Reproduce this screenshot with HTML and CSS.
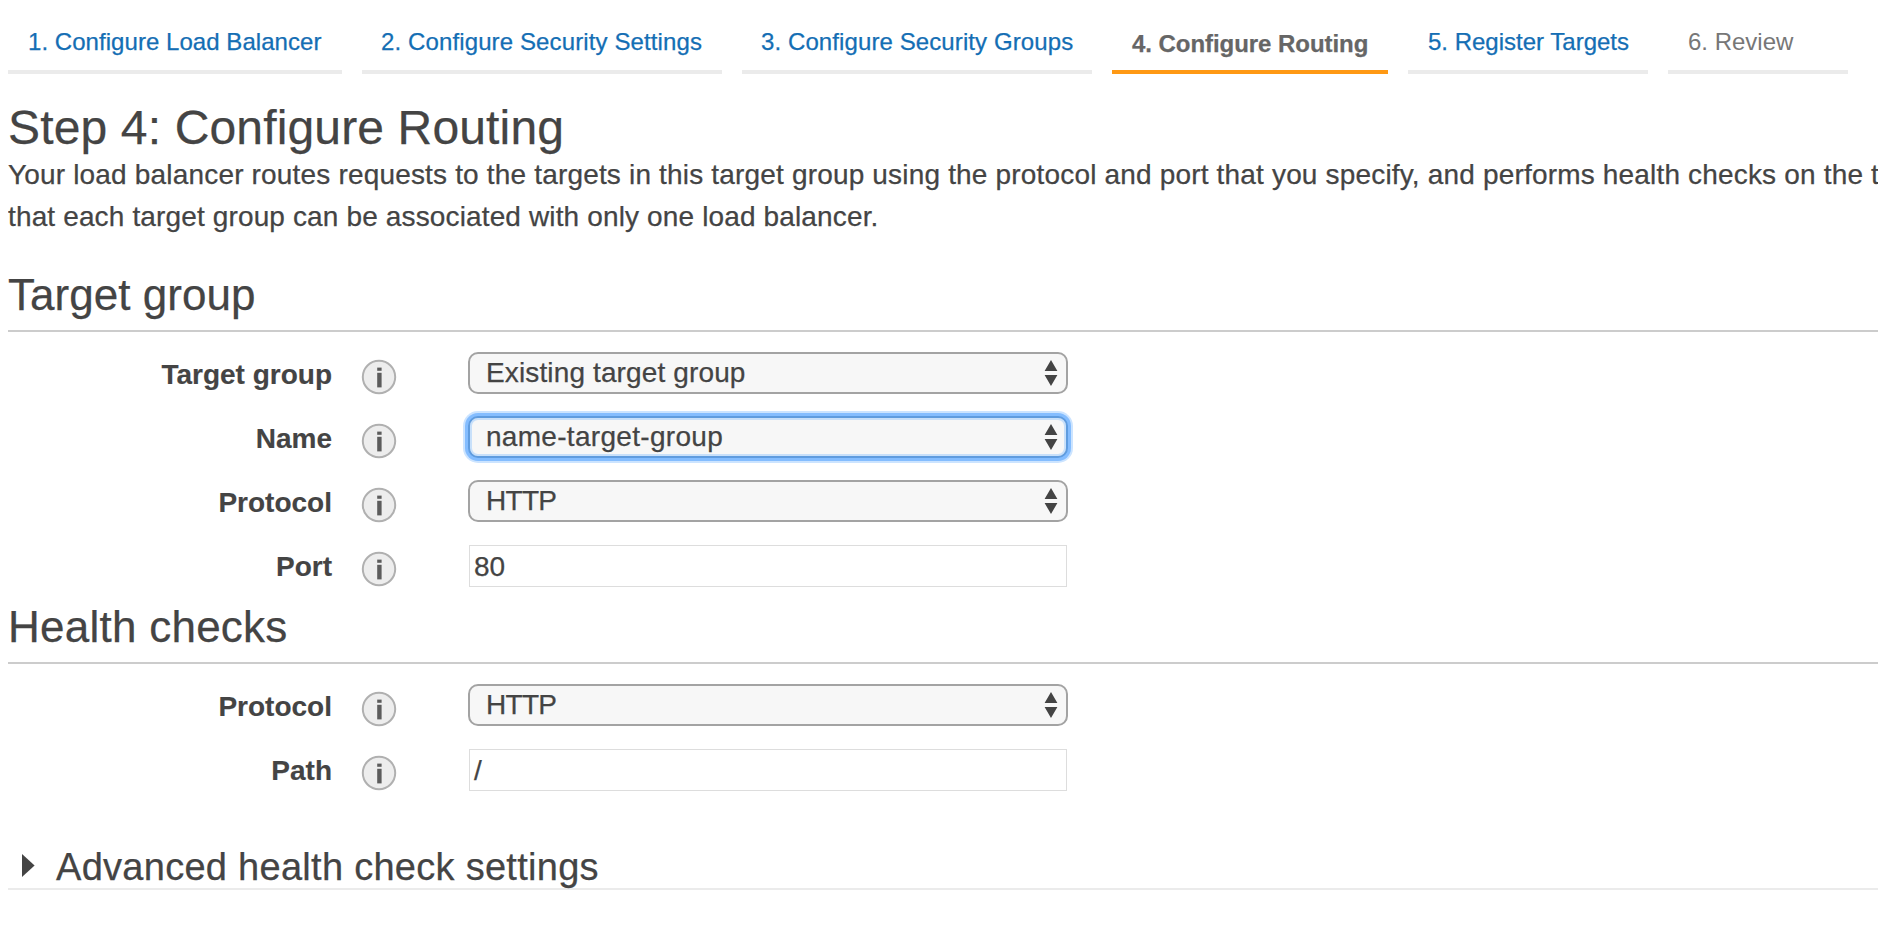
FILE: index.html
```html
<!DOCTYPE html>
<html lang="en">
<head>
<meta charset="utf-8">
<title>Configure Routing</title>
<link rel="stylesheet" href="styles.css">
</head>
<body>
<svg class="defs" width="0" height="0" aria-hidden="true">
  <symbol id="info" viewBox="0 0 36 36">
    <circle cx="18" cy="18" r="16.2" fill="#ededed" stroke="#b0b0b0" stroke-width="2"/>
    <rect x="16.2" y="8.6" width="4.4" height="3.2" fill="#5c5c5c"/>
    <rect x="16.2" y="13.8" width="4.4" height="14.6" fill="#5c5c5c"/>
  </symbol>
  <symbol id="updown" viewBox="0 0 14 28">
    <path d="M7 1L13.4 12H.6zM.6 16H13.4L7 27z" fill="#444"/>
  </symbol>
</svg>
<nav class="steps">
  <a class="step s1">1. Configure Load Balancer</a>
  <a class="step s2">2. Configure Security Settings</a>
  <a class="step s3">3. Configure Security Groups</a>
  <a class="step s4 active">4. Configure Routing</a>
  <a class="step s5">5. Register Targets</a>
  <a class="step s6 pending">6. Review</a>
</nav>
<main>
  <h1>Step 4: Configure Routing</h1>
  <p class="intro">Your load balancer routes requests to the targets in this target group using the protocol and port that you specify, and performs health checks on the t<br><span class="note">that each target group can be associated with only one load balancer.</span></p>

  <h2>Target group</h2>
  <div class="form">
    <div class="row"><label>Target group</label><svg class="info"><use href="#info"/></svg><div class="select"><span class="existing">Existing target group</span><svg><use href="#updown"/></svg></div></div>
    <div class="row"><label>Name</label><svg class="info"><use href="#info"/></svg><div class="select focused"><span class="name">name-target-group</span><svg><use href="#updown"/></svg></div></div>
    <div class="row"><label>Protocol</label><svg class="info"><use href="#info"/></svg><div class="select"><span class="protocol">HTTP</span><svg><use href="#updown"/></svg></div></div>
    <div class="row"><label>Port</label><svg class="info"><use href="#info"/></svg><div class="input">80</div></div>
  </div>

  <h2 class="health">Health checks</h2>
  <div class="form">
    <div class="row"><label>Protocol</label><svg class="info"><use href="#info"/></svg><div class="select"><span class="protocol">HTTP</span><svg><use href="#updown"/></svg></div></div>
    <div class="row"><label>Path</label><svg class="info"><use href="#info"/></svg><div class="input">/</div></div>
  </div>

  <h3><svg class="caret" viewBox="0 0 13 23"><path d="M0 0L12.6 11.5L0 23z" fill="#444"/></svg>Advanced health check settings</h3>
</main>
</body>
</html>
```

FILE: styles.css
```css
* { box-sizing: border-box; }
body {
  margin: 0;
  width: 1878px;
  height: 936px;
  overflow: hidden;
  background: #fff;
  color: #444;
  font-family: "Liberation Sans", Arial, sans-serif;
  font-size: 28px;
  -webkit-text-stroke: 0.25px;
  font-kerning: normal;
}
.defs { position: absolute; }
.steps { display: flex; gap: 20px; padding-left: 8px; height: 74px; }
.step {
  padding: 13px 0 0 20px;
  border-bottom: 4px solid #ebebeb;
  color: #146eb4;
  font-size: 24px;
  line-height: 57px;
  white-space: nowrap;
}
.s1 { width: 334px; letter-spacing: 0.05px; }
.s2 { width: 360px; padding-left: 19px; letter-spacing: 0.12px; }
.s3 { width: 350px; padding-left: 19px; letter-spacing: 0.1px; }
.s4 { width: 276px; letter-spacing: -0.05px; }
.s5 { width: 240px; }
.s6 { width: 180px; }
.step.active {
  padding-top: 17px;
  line-height: 53px;
  border-color: #ff9914;
  color: #666;
  font-weight: bold;
}
.step.pending { color: #777; -webkit-text-stroke: 0; }
main { padding: 28px 0 0 8px; }
h1, h2, h3, p { margin: 0; font-weight: normal; white-space: nowrap; }
h1 { font-size: 48px; line-height: 52px; letter-spacing: 0.15px; }
.intro { line-height: 42px; overflow: hidden; letter-spacing: 0.175px; }
.note { letter-spacing: 0.14px; }
h2 {
  margin-top: 32px;
  padding-bottom: 10px;
  border-bottom: 2px solid #ccc;
  font-size: 44px;
  line-height: 50px;
  letter-spacing: 0.04px;
}
h2.health { margin-top: 16px; letter-spacing: 0.25px; }
.form { display: grid; gap: 22px; margin-top: 20px; }
.row { display: flex; height: 42px; }
label {
  width: 324px;
  text-align: right;
  font-weight: bold;
  line-height: 46px;
  -webkit-text-stroke: 0.15px;
}
.info { width: 36px; height: 36px; margin: 7px 71px 0 29px; }
.select {
  display: flex;
  justify-content: space-between;
  width: 600px;
  height: 42px;
  padding: 0 8px 0 16px;
  border: 2px solid #a3a3a3;
  border-radius: 10px;
  background: #f7f7f7;
  line-height: 37px;
}
.select svg { width: 14px; height: 28px; margin-top: 5px; }
.select.focused {
  border-color: #5f9cdf;
  box-shadow: 0 0 0 3px #84bdff, 0 0 0 5px #cce4ff, inset 0 0 0 2px #c8e0fa;
}
.existing { letter-spacing: 0.13px; }
.name { letter-spacing: 0.3px; }
.protocol { letter-spacing: -0.7px; }
.input {
  width: 598px;
  height: 42px;
  margin: 1px 0 0 1px;
  padding-left: 4px;
  border: 1px solid #ddd;
  line-height: 41px;
}
h3 {
  display: flex;
  height: 45px;
  margin-top: 55px;
  border-bottom: 2px solid #ebebeb;
  font-size: 38px;
  line-height: 45px;
  letter-spacing: 0.28px;
}
.caret { width: 13px; height: 23px; margin: 9px 21px 0 14px; }
```
